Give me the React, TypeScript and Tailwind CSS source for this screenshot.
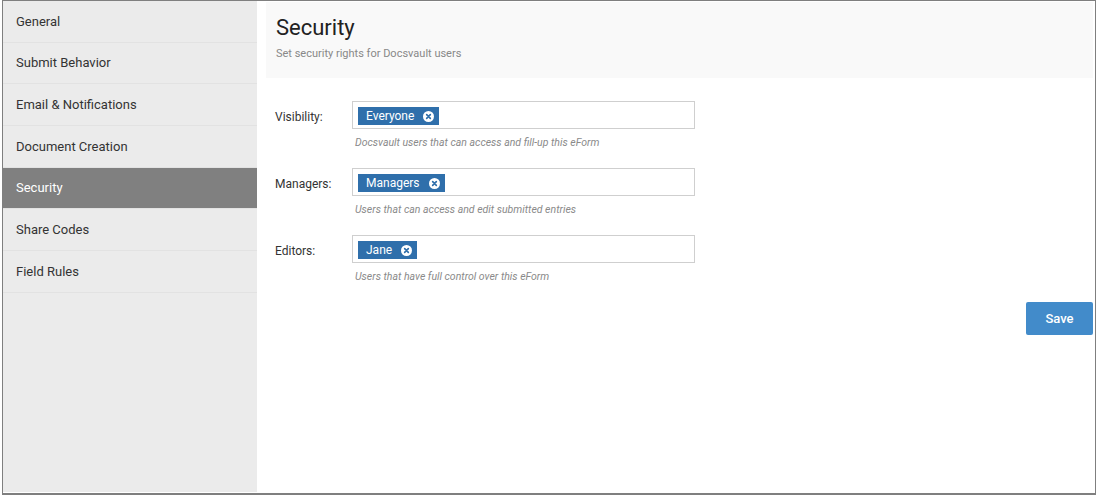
import { useState } from "react";

const NAV = ["General", "Submit Behavior", "Email & Notifications", "Document Creation", "Security", "Share Codes", "Field Rules"];

const FIELDS = [
  { label: "Visibility:", tag: "Everyone", help: "Docsvault users that can access and fill-up this eForm" },
  { label: "Managers:", tag: "Managers", help: "Users that can access and edit submitted entries" },
  { label: "Editors:", tag: "Jane", help: "Users that have full control over this eForm" },
];

function RemoveIcon() {
  return (
    <svg width="11" height="11" viewBox="0 0 12 12" className="shrink-0">
      <circle cx="6" cy="6" r="6" fill="#ffffff" />
      <path d="M4 4 L8 8 M8 4 L4 8" stroke="#2f6fab" strokeWidth="1.8" strokeLinecap="round" />
    </svg>
  );
}

export default function App() {
  const [active, setActive] = useState("Security");

  return (
    <div className="w-[1096px] h-[496px] bg-white pl-[2px] font-['Roboto',sans-serif]">
      <div className="w-[1094px] h-[495px] border border-b-2 border-[#7f7f7f] flex">
        <div className="w-[254px] h-[491px] bg-[#ebebeb] flex flex-col">
          {NAV.map((item) => (
            <div
              key={item}
              onClick={() => setActive(item)}
              className={`h-[41.67px] flex items-center pl-[13px] text-[13px] border-b border-[#e2e2e2] ${
                active === item ? "bg-[#808080] text-white border-[#808080]" : "text-[#333]"
              }`}
            >
              {item}
            </div>
          ))}
        </div>

        <div className="flex-1 pl-[9px] pr-[2px] pt-[1px] flex flex-col">
          <div className="h-[76px] bg-[#f9f9f9] pl-[10px] pt-[12px]">
            <h1 className="text-[22px] leading-[28px] text-[#222]">Security</h1>
            <p className="text-[11px] text-[#888] mt-[4px]">Set security rights for Docsvault users</p>
          </div>

          <div className="pt-[23px] pl-[9px] flex flex-col gap-[18px]">
            {FIELDS.map((f) => (
              <div key={f.label} className="flex">
                <div className="w-[77px] h-[28px] flex items-center pt-[3px] text-[12px] text-[#333]">{f.label}</div>
                <div className="flex flex-col">
                  <div className="w-[343px] h-[28px] border border-[#cfcfcf] bg-white flex items-center pl-[5px] pt-[2px]">
                    <span className="h-[18px] bg-[#2f6fab] text-white text-[12px] flex items-center gap-[9px] pl-[8px] pr-[5px]">
                      {f.tag}
                      <RemoveIcon />
                    </span>
                  </div>
                  <div className="text-[10.5px] italic text-[#8a8a8a] pl-[3px] mt-[7px] leading-[14px]">{f.help}</div>
                </div>
              </div>
            ))}
          </div>

          <div className="flex justify-end mt-[18px]">
            <button className="w-[67px] h-[33px] bg-[#428bca] rounded-[2px] text-white text-[13px] font-medium">Save</button>
          </div>
        </div>
      </div>
    </div>
  );
}
